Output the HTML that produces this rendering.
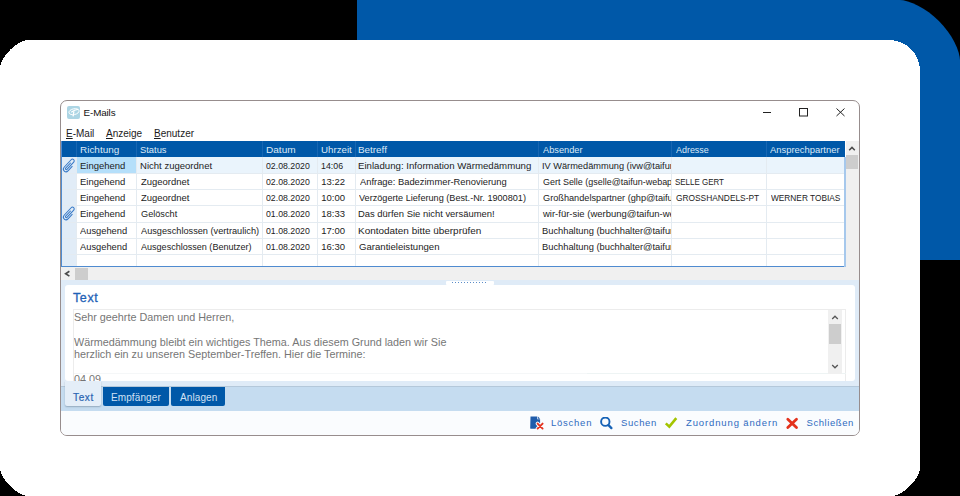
<!DOCTYPE html>
<html><head><meta charset="utf-8">
<style>
*{box-sizing:border-box;margin:0;padding:0}
html,body{width:960px;height:496px;overflow:hidden;background:#000}
body{position:relative;font-family:"Liberation Sans",sans-serif}
.abs{position:absolute}
#win{left:60px;top:100px;width:800px;height:336px;border:1px solid #978d8d;border-radius:7px;background:#fff;overflow:hidden}
#win .tbar{position:absolute;left:0;right:0;top:310px;bottom:0;background:#fafcfe}
.t{position:absolute;white-space:nowrap;line-height:1}
.cell{position:absolute;height:16px;overflow:hidden;white-space:nowrap;font-size:9.5px;line-height:16px;color:#1c1c1c}
.cell span{position:absolute;top:1px;transform-origin:0 11px}
.hd{color:#dce9f6}
.menu{position:absolute;top:128px;font-size:10px;line-height:12px;color:#1c1c1c;white-space:nowrap}
.menu u{text-decoration:underline;text-underline-offset:1px}
.tb{position:absolute;top:417px;font-size:9.5px;line-height:12px;color:#2f6bc0;white-space:nowrap}
</style></head>
<body>
<svg class="abs" style="left:0;top:0" width="960" height="496" viewBox="0 0 960 496"><path d="M357.00 0.00 L900.00 0.00 L903.29 0.36 L907.78 1.44 L912.78 3.21 L918.06 5.65 L923.44 8.72 L928.78 12.36 L933.97 16.51 L938.91 21.09 L943.49 26.03 L947.64 31.22 L951.28 36.56 L954.35 41.94 L956.79 47.22 L958.56 52.22 L959.64 56.71 L960.00 60.00 L960.00 260.00 L357.00 260.00 Z" fill="#0058a8"/><path d="M0.00 67.00 L0.17 65.78 L0.69 63.94 L1.54 61.81 L2.70 59.50 L4.16 57.09 L5.89 54.67 L7.85 52.28 L9.99 49.99 L12.28 47.85 L14.67 45.89 L17.09 44.16 L19.50 42.70 L21.81 41.54 L23.94 40.69 L25.78 40.17 L27.00 40.00 L889.00 40.00 L892.04 40.15 L895.05 40.60 L898.00 41.33 L900.86 42.36 L903.61 43.66 L906.22 45.22 L908.67 47.04 L910.92 49.08 L912.96 51.33 L914.78 53.78 L916.34 56.39 L917.64 59.14 L918.67 62.00 L919.40 64.95 L919.85 67.96 L920.00 71.00 L920.00 469.00 L919.83 470.22 L919.31 472.06 L918.46 474.19 L917.30 476.50 L915.84 478.91 L914.11 481.33 L912.15 483.72 L910.01 486.01 L907.72 488.15 L905.33 490.11 L902.91 491.84 L900.50 493.30 L898.19 494.46 L896.06 495.31 L894.22 495.83 L893.00 496.00 L27.00 496.00 L25.78 495.83 L23.94 495.31 L21.81 494.46 L19.50 493.30 L17.09 491.84 L14.67 490.11 L12.28 488.15 L9.99 486.01 L7.85 483.72 L5.89 481.33 L4.16 478.91 L2.70 476.50 L1.54 474.19 L0.69 472.06 L0.17 470.22 L0.00 469.00 Z" fill="#fff" shape-rendering="crispEdges"/></svg>
<div id="win" class="abs"><div class="tbar"></div></div>

<!-- title bar -->
<div class="abs" style="left:67px;top:106px;width:13px;height:13px;background:#acd5e4;border-radius:2px"></div>
<svg class="abs" style="left:67px;top:106px" width="13" height="13" viewBox="0 0 13 13">
 <ellipse cx="7" cy="5.7" rx="5.1" ry="2.9" fill="none" stroke="#fff" stroke-width="0.9" transform="rotate(-12 7 5.7)"/>
 <path d="M4.2 6.3 Q7.5 3.9 11.3 3.3" stroke="#fff" stroke-width="1.1" fill="none"/>
 <path d="M6.9 5.3 L6.1 10.4" stroke="#fff" stroke-width="1.3" fill="none"/>
</svg>
<div class="t" style="left:83.6px;top:107.5px;font-size:9.8px;letter-spacing:-0.12px;color:#111">E-Mails</div>
<svg class="abs" style="left:760px;top:104px" width="90" height="16" viewBox="0 0 90 16">
 <path d="M3 8.5 H11" stroke="#222" stroke-width="1"/>
 <rect x="39.5" y="4.5" width="8" height="7.5" fill="none" stroke="#222" stroke-width="1"/>
 <path d="M76.5 4.5 L84.5 12 M84.5 4.5 L76.5 12" stroke="#222" stroke-width="1"/>
</svg>

<!-- menu -->
<div class="menu" style="left:66px"><u>E</u>-Mail</div>
<div class="menu" style="left:106px"><u>A</u>nzeige</div>
<div class="menu" style="left:154px"><u>B</u>enutzer</div>

<div class="abs" style="left:61px;top:141px;width:798px;height:140px;background:#f0f0f0"></div>
<div class="abs" style="left:61px;top:141px;width:785px;height:126px;background:#fff"></div>
<div class="abs" style="left:62px;top:157px;width:15px;height:109px;background:#e1ecf7"></div>
<div class="abs" style="left:77px;top:157px;width:768px;height:16px;background:#eaf4fc"></div>
<div class="abs" style="left:77px;top:157px;width:59px;height:16px;background:#b5dffa"></div>
<div class="abs" style="left:61px;top:141px;width:784px;height:16px;background:#0058a8"></div>
<div class="abs" style="left:76px;top:141px;width:1px;height:16px;background:#1766b2"></div>
<div class="abs" style="left:136px;top:141px;width:1px;height:16px;background:#1766b2"></div>
<div class="abs" style="left:262px;top:141px;width:1px;height:16px;background:#1766b2"></div>
<div class="abs" style="left:317px;top:141px;width:1px;height:16px;background:#1766b2"></div>
<div class="abs" style="left:355px;top:141px;width:1px;height:16px;background:#1766b2"></div>
<div class="abs" style="left:538px;top:141px;width:1px;height:16px;background:#1766b2"></div>
<div class="abs" style="left:671px;top:141px;width:1px;height:16px;background:#1766b2"></div>
<div class="abs" style="left:766px;top:141px;width:1px;height:16px;background:#1766b2"></div>
<div class="abs" style="left:62px;top:173px;width:783px;height:1px;background:#e4ebf1"></div>
<div class="abs" style="left:62px;top:189px;width:783px;height:1px;background:#e4ebf1"></div>
<div class="abs" style="left:62px;top:205px;width:783px;height:1px;background:#e4ebf1"></div>
<div class="abs" style="left:62px;top:222px;width:783px;height:1px;background:#e4ebf1"></div>
<div class="abs" style="left:62px;top:238px;width:783px;height:1px;background:#e4ebf1"></div>
<div class="abs" style="left:62px;top:254px;width:783px;height:1px;background:#e4ebf1"></div>
<div class="abs" style="left:76px;top:157px;width:1px;height:109px;background:#e4ebf1"></div>
<div class="abs" style="left:136px;top:157px;width:1px;height:109px;background:#e4ebf1"></div>
<div class="abs" style="left:262px;top:157px;width:1px;height:109px;background:#e4ebf1"></div>
<div class="abs" style="left:317px;top:157px;width:1px;height:109px;background:#e4ebf1"></div>
<div class="abs" style="left:355px;top:157px;width:1px;height:109px;background:#e4ebf1"></div>
<div class="abs" style="left:538px;top:157px;width:1px;height:109px;background:#e4ebf1"></div>
<div class="abs" style="left:671px;top:157px;width:1px;height:109px;background:#e4ebf1"></div>
<div class="abs" style="left:766px;top:157px;width:1px;height:109px;background:#e4ebf1"></div>
<div class="abs" style="left:61px;top:141px;width:1px;height:126px;background:#4f8bd0"></div>
<div class="abs" style="left:61px;top:266px;width:785px;height:1px;background:#4f8bd0"></div>
<div class="abs" style="left:844px;top:157px;width:2px;height:110px;background:#a6c8ec"></div>
<div class="cell hd" style="left:78px;top:141px;width:58px"><span style="left:1.71px;transform:scale(1.046,1.0)">Richtung</span></div>
<div class="cell hd" style="left:137px;top:141px;width:125px"><span style="left:3.34px;transform:scale(0.984,1.0)">Status</span></div>
<div class="cell hd" style="left:263px;top:141px;width:54px"><span style="left:2.55px;transform:scale(1.059,1.0)">Datum</span></div>
<div class="cell hd" style="left:318px;top:141px;width:37px"><span style="left:3.21px;transform:scale(1.022,1.0)">Uhrzeit</span></div>
<div class="cell hd" style="left:356px;top:141px;width:182px"><span style="left:2.03px;transform:scale(1.040,1.0)">Betreff</span></div>
<div class="cell hd" style="left:539px;top:141px;width:132px"><span style="left:4.15px;transform:scale(0.970,1.0)">Absender</span></div>
<div class="cell hd" style="left:672px;top:141px;width:94px"><span style="left:4.00px;transform:scale(0.940,1.0)">Adresse</span></div>
<div class="cell hd" style="left:767px;top:141px;width:78px"><span style="left:3.32px;transform:scale(0.990,1.0)">Ansprechpartner</span></div>
<div class="cell " style="left:78px;top:157px;width:58px"><span style="left:1.74px;transform:scale(0.997,1.0)">Eingehend</span></div>
<div class="cell " style="left:137px;top:157px;width:125px"><span style="left:3.08px;transform:scale(1.004,1.0)">Nicht zugeordnet</span></div>
<div class="cell " style="left:263px;top:157px;width:54px"><span style="left:3.00px;transform:scale(0.920,1.0)">02.08.2020</span></div>
<div class="cell " style="left:318px;top:157px;width:37px"><span style="left:3.28px;transform:scale(0.928,1.0)">14:06</span></div>
<div class="cell " style="left:356px;top:157px;width:182px"><span style="left:2.05px;transform:scale(1.016,1.0)">Einladung: Information Wärmedämmung</span></div>
<div class="cell " style="left:539px;top:157px;width:132px"><span style="left:3.30px;transform:scale(0.971,1.0)">IV Wärmedämmung (ivw@taifun-webapp.de)</span></div>
<div class="cell " style="left:78px;top:173px;width:58px"><span style="left:1.74px;transform:scale(0.997,1.0)">Eingehend</span></div>
<div class="cell " style="left:137px;top:173px;width:125px"><span style="left:3.58px;transform:scale(0.997,1.0)">Zugeordnet</span></div>
<div class="cell " style="left:263px;top:173px;width:54px"><span style="left:3.00px;transform:scale(0.920,1.0)">02.08.2020</span></div>
<div class="cell " style="left:318px;top:173px;width:37px"><span style="left:3.23px;transform:scale(1.000,1.0)">13:22</span></div>
<div class="cell " style="left:356px;top:173px;width:182px"><span style="left:3.51px;transform:scale(0.985,1.0)">Anfrage: Badezimmer-Renovierung</span></div>
<div class="cell " style="left:539px;top:173px;width:132px"><span style="left:4.38px;transform:scale(0.943,1.0)">Gert Selle (gselle@taifun-webapp.de)</span></div>
<div class="cell " style="left:672px;top:173px;width:94px"><span style="left:2.88px;transform:scale(0.838,1.0)">SELLE GERT</span></div>
<div class="cell " style="left:78px;top:189px;width:58px"><span style="left:1.74px;transform:scale(0.997,1.0)">Eingehend</span></div>
<div class="cell " style="left:137px;top:189px;width:125px"><span style="left:3.58px;transform:scale(0.997,1.0)">Zugeordnet</span></div>
<div class="cell " style="left:263px;top:189px;width:54px"><span style="left:3.00px;transform:scale(0.920,1.0)">02.08.2020</span></div>
<div class="cell " style="left:318px;top:189px;width:37px"><span style="left:3.23px;transform:scale(1.000,1.0)">10:00</span></div>
<div class="cell " style="left:356px;top:189px;width:182px"><span style="left:3.39px;transform:scale(0.961,1.0)">Verzögerte Lieferung (Best.-Nr. 1900801)</span></div>
<div class="cell " style="left:539px;top:189px;width:132px"><span style="left:4.37px;transform:scale(0.966,1.0)">Großhandelspartner (ghp@taifun-webapp.de)</span></div>
<div class="cell " style="left:672px;top:189px;width:94px"><span style="left:3.56px;transform:scale(0.880,1.0)">GROSSHANDELS-PT</span></div>
<div class="cell " style="left:767px;top:189px;width:78px"><span style="left:3.91px;transform:scale(0.874,1.0)">WERNER TOBIAS</span></div>
<div class="cell " style="left:78px;top:205px;width:58px"><span style="left:1.74px;transform:scale(0.997,1.0)">Eingehend</span></div>
<div class="cell " style="left:137px;top:205px;width:125px"><span style="left:4.05px;transform:scale(0.965,1.0)">Gelöscht</span></div>
<div class="cell " style="left:263px;top:205px;width:54px"><span style="left:3.00px;transform:scale(0.920,1.0)">01.08.2020</span></div>
<div class="cell " style="left:318px;top:205px;width:37px"><span style="left:3.23px;transform:scale(1.000,1.0)">18:33</span></div>
<div class="cell " style="left:356px;top:205px;width:182px"><span style="left:2.07px;transform:scale(0.991,1.0)">Das dürfen Sie nicht versäumen!</span></div>
<div class="cell " style="left:539px;top:205px;width:132px"><span style="left:4.15px;transform:scale(0.998,1.0)">wir-für-sie (werbung@taifun-webapp.de)</span></div>
<div class="cell " style="left:78px;top:222px;width:58px"><span style="left:2.49px;transform:scale(0.981,1.0)">Ausgehend</span></div>
<div class="cell " style="left:137px;top:222px;width:125px"><span style="left:3.83px;transform:scale(0.968,1.0)">Ausgeschlossen (vertraulich)</span></div>
<div class="cell " style="left:263px;top:222px;width:54px"><span style="left:3.00px;transform:scale(0.920,1.0)">01.08.2020</span></div>
<div class="cell " style="left:318px;top:222px;width:37px"><span style="left:3.23px;transform:scale(1.000,1.0)">17:00</span></div>
<div class="cell " style="left:356px;top:222px;width:182px"><span style="left:2.03px;transform:scale(1.047,1.0)">Kontodaten bitte überprüfen</span></div>
<div class="cell " style="left:539px;top:222px;width:132px"><span style="left:3.41px;transform:scale(0.981,1.0)">Buchhaltung (buchhalter@taifun-webapp.de)</span></div>
<div class="cell " style="left:78px;top:238px;width:58px"><span style="left:2.49px;transform:scale(0.981,1.0)">Ausgehend</span></div>
<div class="cell " style="left:137px;top:238px;width:125px"><span style="left:3.83px;transform:scale(0.952,1.0)">Ausgeschlossen (Benutzer)</span></div>
<div class="cell " style="left:263px;top:238px;width:54px"><span style="left:3.00px;transform:scale(0.920,1.0)">01.08.2020</span></div>
<div class="cell " style="left:318px;top:238px;width:37px"><span style="left:3.23px;transform:scale(1.000,1.0)">16:30</span></div>
<div class="cell " style="left:356px;top:238px;width:182px"><span style="left:3.01px;transform:scale(1.009,1.0)">Garantieleistungen</span></div>
<div class="cell " style="left:539px;top:238px;width:132px"><span style="left:3.41px;transform:scale(0.981,1.0)">Buchhaltung (buchhalter@taifun-webapp.de)</span></div>

<!-- attachment icons -->
<svg class="abs" style="left:60px;top:156px" width="18" height="18" viewBox="0 0 18 18"><path d="M8 5.5 V14 A1 1 0 0 0 10 14 V2.7 A2 2 0 0 0 6 2.7 V14.4 A3 3 0 0 0 12 14.4 V7" fill="none" stroke="#3577c6" stroke-width="1.15" transform="translate(9.3 9.6) rotate(43) scale(0.88) translate(-9 -9)"/></svg>
<svg class="abs" style="left:60px;top:204px" width="18" height="18" viewBox="0 0 18 18"><path d="M8 5.5 V14 A1 1 0 0 0 10 14 V2.7 A2 2 0 0 0 6 2.7 V14.4 A3 3 0 0 0 12 14.4 V7" fill="none" stroke="#3577c6" stroke-width="1.15" transform="translate(9.3 9.6) rotate(43) scale(0.88) translate(-9 -9)"/></svg>
<!-- vertical scrollbar -->
<svg class="abs" style="left:846px;top:141px" width="12" height="14" viewBox="0 0 12 14">
 <path d="M3.2 9.2 L6 6.4 L8.8 9.2" fill="none" stroke="#4a4a4a" stroke-width="1.5"/>
</svg>
<div class="abs" style="left:846px;top:155px;width:12px;height:14px;background:#cdcdcd"></div>
<!-- horizontal scrollbar -->
<svg class="abs" style="left:62px;top:267px" width="12" height="13" viewBox="0 0 12 13">
 <path d="M7.4 4.3 L3.6 6.7 L7.4 9.1" fill="none" stroke="#4a4a4a" stroke-width="1.6"/>
</svg>
<div class="abs" style="left:75px;top:268px;width:13px;height:12px;background:#cdcdcd"></div>

<!-- lower panel -->
<div class="abs" style="left:61px;top:280px;width:798px;height:107px;background:#dfebf7"></div>
<div class="abs" style="left:446px;top:281px;width:48px;height:4px;background:#fff;border-radius:1px"></div>
<div class="abs" style="left:452px;top:282px;width:36px;height:1px;background:repeating-linear-gradient(90deg,#5a8cc8 0 1px,transparent 1px 3px)"></div>
<div class="abs" style="left:65px;top:285px;width:790px;height:96px;background:#fff;border-radius:3px"></div>
<div class="t" style="left:73px;top:292px;font-size:12.5px;letter-spacing:0.6px;color:#1f62b6;-webkit-text-stroke:0.3px #1f62b6">Text</div>
<div class="abs" style="left:73px;top:309px;width:773px;height:72px;border:1px solid #ececec;border-bottom:none;overflow:hidden">
  <div style="position:absolute;left:0px;top:1px;font-size:10.8px;line-height:12.4px;color:#767676;white-space:nowrap">Sehr geehrte Damen und Herren,<br><br>Wärmedämmung bleibt ein wichtiges Thema. Aus diesem Grund laden wir Sie<br>herzlich ein zu unseren September-Treffen. Hier die Termine:<br><br>04.09.</div>
</div>
<div class="abs" style="left:74px;top:373px;width:513px;height:1px;background:#f5f7f8"></div>
<div class="abs" style="left:587px;top:373px;width:259px;height:1px;background:#eef4f4"></div>
<div class="abs" style="left:828px;top:310px;width:14px;height:64px;background:#f0f0f0"></div>
<svg class="abs" style="left:828px;top:311px" width="14" height="12" viewBox="0 0 14 12">
 <path d="M4.2 8 L7 5.2 L9.8 8" fill="none" stroke="#555" stroke-width="1.3"/>
</svg>
<div class="abs" style="left:829px;top:324px;width:12px;height:20px;background:#cdcdcd"></div>
<svg class="abs" style="left:828px;top:361px" width="14" height="12" viewBox="0 0 14 12">
 <path d="M4.2 4 L7 6.8 L9.8 4" fill="none" stroke="#555" stroke-width="1.3"/>
</svg>

<!-- tab bar -->
<div class="abs" style="left:61px;top:387px;width:798px;height:24px;background:#c5dcf0"></div>
<div class="abs" style="left:61px;top:386px;width:798px;height:1px;background:#b4c8da"></div>
<div class="abs" style="left:65px;top:381px;width:36px;height:25px;background:#e4eef8;border-radius:0 0 2px 2px;box-shadow:0 1px 1.5px rgba(40,60,80,0.3)"></div>
<div class="t" style="left:73px;top:393px;font-size:10px;letter-spacing:0.65px;color:#2a64b2;-webkit-text-stroke:0.2px #2a64b2">Text</div>
<div class="abs" style="left:103px;top:387px;width:66px;height:19px;background:#0058a8;border-radius:0 0 2px 2px"></div>
<div class="t" style="left:111px;top:393px;font-size:10px;letter-spacing:0.1px;color:#d0e2f5">Empfänger</div>
<div class="abs" style="left:171px;top:387px;width:54px;height:19px;background:#0058a8;border-radius:0 0 2px 2px"></div>
<div class="t" style="left:180px;top:393px;font-size:10px;letter-spacing:0.1px;color:#d0e2f5">Anlagen</div>

<!-- toolbar -->
<svg class="abs" style="left:529px;top:415px" width="16" height="16" viewBox="0 0 16 16">
 <path d="M1.5 1.6 Q1.2 1.4 1.6 1.4 H8.2 V4.3 H11.1 V13.5 Q11.1 13.7 10.9 13.7 H1.6 Q1.2 13.7 1.2 13.3 Z" fill="#1f5cab"/>
 <path d="M8.9 1.5 L11.1 3.7 H8.9 Z" fill="#1f5cab"/>
 <path d="M8.6 8.6 L13.6 13.6 M13.6 8.6 L8.6 13.6" stroke="#fafcfe" stroke-width="3.8" stroke-linecap="round"/>
 <path d="M8.6 8.6 L13.6 13.6 M13.6 8.6 L8.6 13.6" stroke="#e4331f" stroke-width="1.9" stroke-linecap="round"/>
</svg>
<div class="tb" style="left:551px;letter-spacing:0.75px">Löschen</div>
<svg class="abs" style="left:600px;top:417px" width="14" height="14" viewBox="0 0 14 14">
 <circle cx="5.3" cy="4.7" r="4.2" fill="none" stroke="#1662b6" stroke-width="1.9"/>
 <path d="M8.5 8.1 L11.4 11.1" stroke="#1662b6" stroke-width="2.3" stroke-linecap="round"/>
</svg>
<div class="tb" style="left:621px;letter-spacing:0.6px">Suchen</div>
<svg class="abs" style="left:663px;top:416px" width="16" height="14" viewBox="0 0 16 14">
 <path d="M2.8 7.4 L6.3 10.6 L13.3 2.2" fill="none" stroke="#a3c400" stroke-width="2.6"/>
</svg>
<div class="tb" style="left:686px;letter-spacing:0.87px">Zuordnung ändern</div>
<svg class="abs" style="left:784px;top:416px" width="16" height="15" viewBox="0 0 16 15">
 <path d="M3.8 3.2 L12.5 11.5 M12.5 3.2 L3.8 11.5" stroke="#e4321c" stroke-width="2.8" stroke-linecap="round"/>
</svg>
<div class="tb" style="left:806.5px;letter-spacing:0.58px">Schließen</div>

</body></html>
